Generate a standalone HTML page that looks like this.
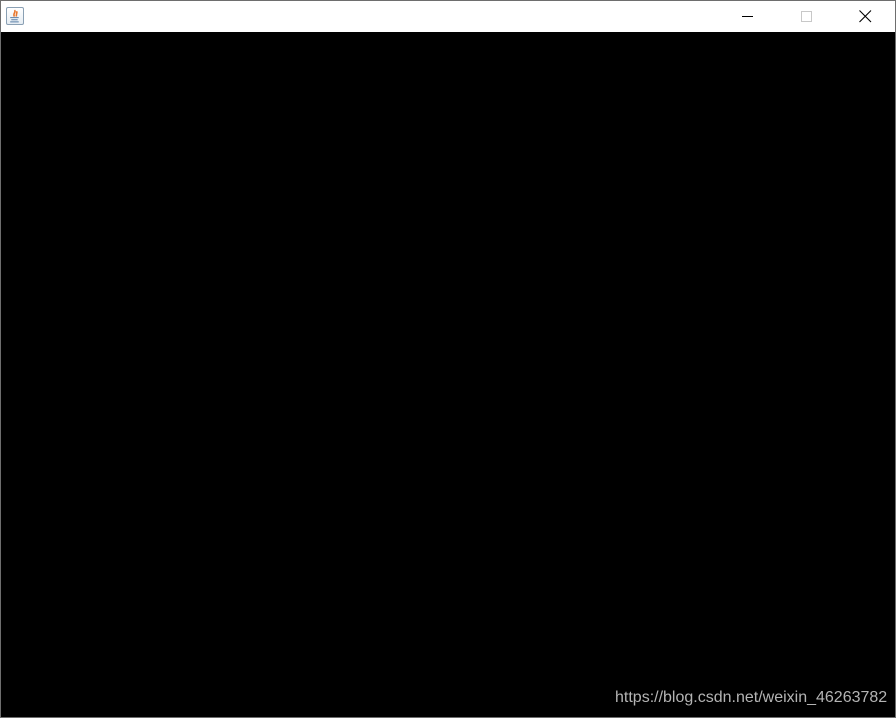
<!DOCTYPE html>
<html><head><meta charset="utf-8"><style>
html,body{margin:0;padding:0;width:896px;height:718px;overflow:hidden;background:#000}
.win{position:absolute;left:0;top:0;width:894px;height:716px;border:1px solid #6e6e6e;background:#000}
.tb{position:absolute;left:0;top:0;width:894px;height:31px;background:#fff}
.ic{position:absolute;left:5px;top:6px;width:18px;height:18px;border:1px solid #8aa0b4;border-radius:2px;background:linear-gradient(#fff,#e6edf3);box-sizing:border-box}
.wm{position:absolute;left:614px;top:688px;font:16px "Liberation Sans",sans-serif;color:#b4b4b4;white-space:nowrap}
</style></head><body>
<div class="win">
<div class="tb">
<div class="ic"><svg width="16" height="16" viewBox="0 0 15 15"><path d="M7 2c2 2-2 3 0 6M9 3c1 2-1 3 0 5" stroke="#e8772e" stroke-width="1.5" fill="none"/><path d="M3 9h8M4 11h6M3 13h8" stroke="#5a7fa8" stroke-width="1" fill="none"/></svg></div>
<svg style="position:absolute;left:741px;top:15px" width="12" height="2"><rect width="11" height="1" fill="#000"/></svg>
<svg style="position:absolute;left:800px;top:10px" width="12" height="12"><rect x="0.5" y="0.5" width="10" height="10" fill="none" stroke="#c8c8c8"/></svg>
<svg style="position:absolute;left:858px;top:9px" width="13" height="13"><path d="M0.5 0.5L12 12M12 0.5L0.5 12" stroke="#000" stroke-width="1.1"/></svg>
</div>
<div class="wm">https://blog.csdn.net/weixin_46263782</div>
</div>
</body></html>
